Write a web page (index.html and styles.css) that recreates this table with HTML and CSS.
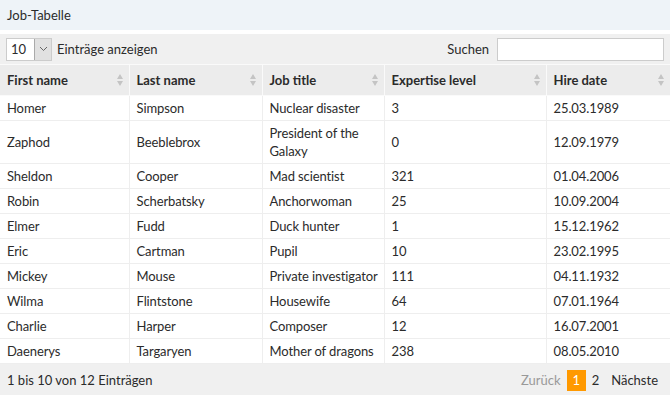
FILE: index.html
```html
<!DOCTYPE html>
<html lang="de">
<head>
<meta charset="utf-8">
<title>Job-Tabelle</title>
<link rel="stylesheet" href="styles.css">
</head>
<body>
<div class="panel">
  <div class="title">Job-Tabelle</div>
  <div class="toolbar">
    <div class="length">
      <div class="select">
        <span class="select-value">10</span>
        <span class="select-btn">
          <svg width="9" height="6" viewBox="0 0 9 6"><path d="M1 1 L4.5 4.5 L8 1" fill="none" stroke="#666" stroke-width="1"/></svg>
        </span>
      </div>
      <span class="length-label">Einträge anzeigen</span>
    </div>
    <div class="search">
      <span class="search-label">Suchen</span>
      <span class="search-input"></span>
    </div>
  </div>
  <table class="grid">
    <colgroup>
      <col class="c1"><col class="c2"><col class="c3"><col class="c4"><col class="c5">
    </colgroup>
    <thead>
      <tr>
        <th><span class="th-in">First name<i class="sort"></i></span></th>
        <th><span class="th-in">Last name<i class="sort"></i></span></th>
        <th><span class="th-in">Job title<i class="sort"></i></span></th>
        <th><span class="th-in">Expertise level<i class="sort"></i></span></th>
        <th><span class="th-in">Hire date<i class="sort"></i></span></th>
      </tr>
    </thead>
    <tbody>
      <tr><td>Homer</td><td>Simpson</td><td>Nuclear disaster</td><td>3</td><td>25.03.1989</td></tr>
      <tr><td>Zaphod</td><td>Beeblebrox</td><td>President of the Galaxy</td><td>0</td><td>12.09.1979</td></tr>
      <tr><td>Sheldon</td><td>Cooper</td><td>Mad scientist</td><td>321</td><td>01.04.2006</td></tr>
      <tr><td>Robin</td><td>Scherbatsky</td><td>Anchorwoman</td><td>25</td><td>10.09.2004</td></tr>
      <tr><td>Elmer</td><td>Fudd</td><td>Duck hunter</td><td>1</td><td>15.12.1962</td></tr>
      <tr><td>Eric</td><td>Cartman</td><td>Pupil</td><td>10</td><td>23.02.1995</td></tr>
      <tr><td>Mickey</td><td>Mouse</td><td>Private investigator</td><td>111</td><td>04.11.1932</td></tr>
      <tr><td>Wilma</td><td>Flintstone</td><td>Housewife</td><td>64</td><td>07.01.1964</td></tr>
      <tr><td>Charlie</td><td>Harper</td><td>Composer</td><td>12</td><td>16.07.2001</td></tr>
      <tr><td>Daenerys</td><td>Targaryen</td><td>Mother of dragons</td><td>238</td><td>08.05.2010</td></tr>
    </tbody>
  </table>
  <div class="footer">
    <span class="info">1 bis 10 von 12 Einträgen</span>
    <div class="pager">
      <span class="pg disabled">Zurück</span>
      <span class="pg current">1</span>
      <span class="pg">2</span>
      <span class="pg next">Nächste</span>
    </div>
  </div>
</div>
</body>
</html>
```
FILE: styles.css
```css
html, body {
  margin: 0;
  padding: 0;
  background: #fff;
}
body {
  font-family: Lato, "Open Sans", "Liberation Sans", sans-serif;
  font-size: 13px;
  color: #2b2b2b;
  width: 670px;
}
.panel {
  display: flex;
  flex-direction: column;
}
.title {
  height: 30px;
  line-height: 30px;
  padding-left: 7px;
  background: #eef3f8;
}
.toolbar {
  margin-top: 4px;
  height: 30px;
  background: #f0f0f0;
  display: flex;
  align-items: center;
  justify-content: space-between;
  padding: 0 6px;
  border-bottom: 1px solid #fafafa;
}
.length {
  display: flex;
  align-items: center;
  gap: 5px;
}
.select {
  display: flex;
  width: 46px;
  height: 23px;
  box-sizing: border-box;
  border: 1px solid #ccc;
  background: #fff;
}
.select-value {
  flex: 1;
  padding-left: 4px;
  line-height: 21px;
}
.select-btn {
  width: 17px;
  box-sizing: border-box;
  border-left: 1px solid #aaa;
  background: #e1e1e1;
  display: flex;
  align-items: center;
  justify-content: center;
}
.search {
  display: flex;
  align-items: center;
  gap: 8px;
}
.search-input {
  display: block;
  width: 167px;
  height: 23px;
  box-sizing: border-box;
  border: 1px solid #ccc;
  background: #fff;
}
.grid {
  width: 670px;
  border-collapse: collapse;
  table-layout: fixed;
}
.c1 { width: 129px; }
.c2 { width: 133px; }
.c3 { width: 122px; }
.c4 { width: 162px; }
.c5 { width: 124px; }
th {
  background: #ececec;
  text-align: left;
  font-weight: bold;
  padding: 6px 6px 6px 7px;
  line-height: 18px;
  border-left: 1px solid #fafafa;
  border-bottom: 1px solid #fafafa;
}
th:first-child, td:first-child { border-left: none; }
.th-in {
  display: flex;
  align-items: center;
  justify-content: space-between;
}
.sort {
  display: flex;
  flex-direction: column;
  align-items: center;
  gap: 2px;
  width: 8px;
  margin-right: -1px;
}
.sort::before, .sort::after {
  content: "";
  width: 0;
  height: 0;
  border-left: 3.5px solid transparent;
  border-right: 3.5px solid transparent;
}
.sort::before { border-bottom: 5px solid #c4c4c4; }
.sort::after { border-top: 5px solid #c4c4c4; }
td {
  padding: 3px 2px 3px 7px;
  line-height: 18px;
  letter-spacing: -0.1px;
  border-left: 1px solid #eeeeee;
  border-bottom: 1px solid #eeeeee;
  vertical-align: middle;
}
.footer {
  height: 32px;
  background: #f0f0f0;
  display: flex;
  align-items: center;
  justify-content: space-between;
  padding: 0 12px 0 7px;
}
.pager {
  display: flex;
  align-items: center;
  gap: 6px;
}
.pg {
  line-height: 21px;
}
.pg.disabled {
  color: #999;
}
.pg.current {
  background: #ff9900;
  color: #fff;
  width: 19px;
  text-align: center;
}
.pg.next {
  margin-left: 6px;
}
```
